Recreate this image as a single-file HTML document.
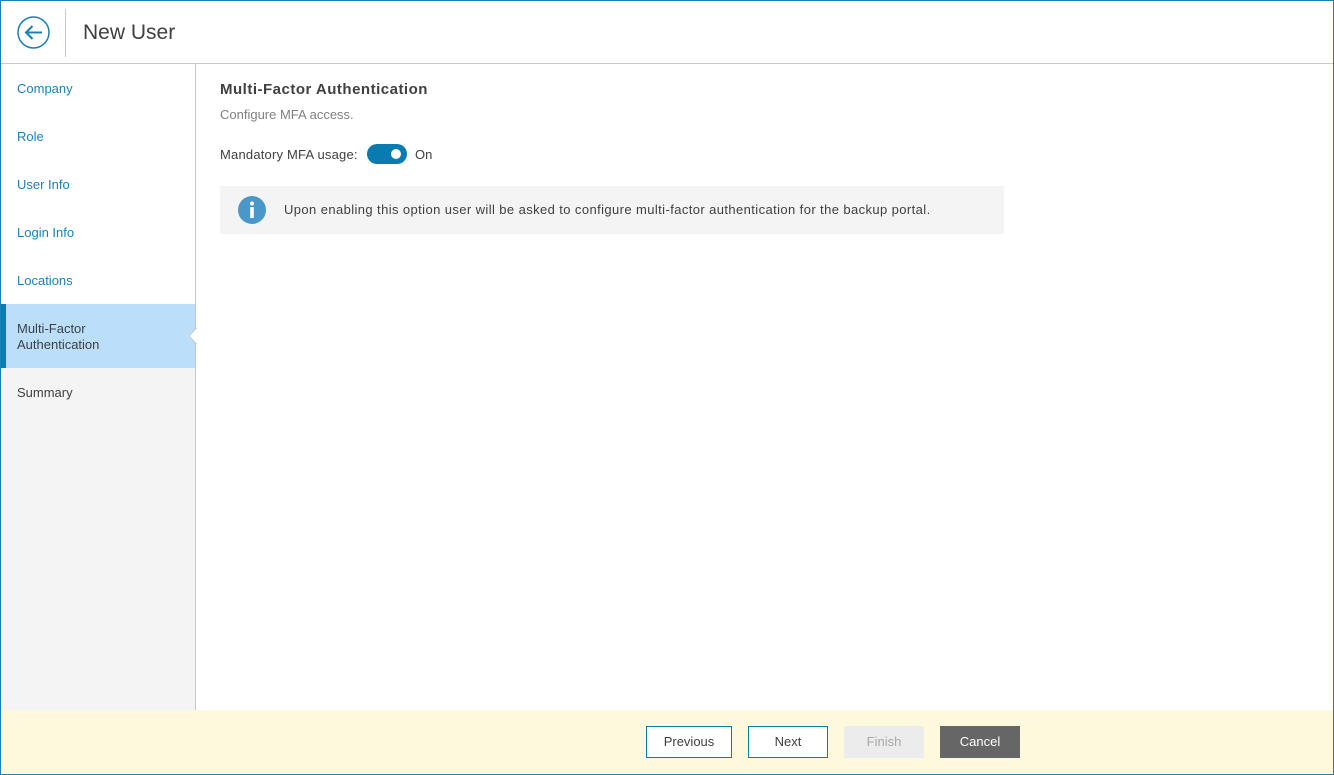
<!DOCTYPE html>
<html><head><style>
*{box-sizing:border-box;margin:0;padding:0}
body{width:1334px;height:775px;overflow:hidden;font-family:"Liberation Sans",sans-serif;background:#fff;position:relative}
.frame{position:absolute;left:0;top:0;width:1334px;height:775px;border:1px solid #1a7fb5}
.hdr{position:absolute;left:1px;top:1px;width:1332px;height:63px;border-bottom:1px solid #c8c8c8}
.title{position:absolute;left:82px;top:20px;font-size:21px;color:#404040}
.vsep{position:absolute;left:64px;top:8px;width:1px;height:48px;background:#c8c8c8}
.side{position:absolute;left:1px;top:64px;width:195px;height:646px;border-right:1px solid #c8c8c8;background:#f4f4f4}
.side .top{position:absolute;left:0;top:0;width:194px;height:240px;background:#fff}
.it{position:absolute;left:16px;font-size:13px;color:#1a7fb5}
.act{position:absolute;left:0;top:240px;width:194px;height:64px;background:#bbdffb;border-left:5px solid #0a7bb0}
.act span{position:absolute;left:11px;top:17px;font-size:13px;color:#404040;line-height:16px}
.main{position:absolute;left:220px}
.foot{position:absolute;left:1px;top:710px;width:1332px;height:63px;background:#fef9dc}
.btn{position:absolute;top:16px;height:32px;font-size:13px;text-align:center;line-height:30px}
</style></head><body>
<div class="hdr">
<svg style="position:absolute;left:16px;top:15px" width="33" height="33" viewBox="0 0 33 33"><circle cx="16.5" cy="16.5" r="15.5" fill="none" stroke="#1a7fb5" stroke-width="1.5"/><path d="M25 16.5H9M15.5 10L9 16.5L15.5 23" fill="none" stroke="#1a7fb5" stroke-width="2"/></svg>
<div class="vsep"></div>
<div class="title">New User</div>
</div>
<div class="side">
<div class="top"></div>
<div class="it" style="top:17px">Company</div>
<div class="it" style="top:65px">Role</div>
<div class="it" style="top:113px">User Info</div>
<div class="it" style="top:161px">Login Info</div>
<div class="it" style="top:209px">Locations</div>
<div class="act"><span>Multi-Factor<br>Authentication</span></div>
<svg style="position:absolute;left:187px;top:264px" width="9" height="16"><path d="M9 0L1 8L9 16Z" fill="#fff"/><path d="M8.5 0L1 8L8.5 16" fill="none" stroke="#c8c8c8"/></svg>
<div class="it" style="top:321px;color:#404040">Summary</div>
</div>
<div class="main" style="top:81px;font-size:15px;font-weight:bold;color:#404040;letter-spacing:0.5px">Multi-Factor Authentication</div>
<div class="main" style="top:107px;font-size:13px;color:#808080">Configure MFA access.</div>
<div class="main" style="top:147px;font-size:13px;color:#404040;letter-spacing:0.2px">Mandatory MFA usage:</div>
<div style="position:absolute;left:367px;top:144px;width:40px;height:20px;border-radius:10px;background:#0a7bb0"><div style="position:absolute;left:24px;top:5px;width:10px;height:10px;border-radius:50%;background:#fff"></div></div>
<div style="position:absolute;left:415px;top:147px;font-size:13px;color:#404040">On</div>
<div style="position:absolute;left:220px;top:186px;width:784px;height:48px;background:#f4f4f4">
<svg style="position:absolute;left:18px;top:10px" width="28" height="28"><circle cx="14" cy="14" r="14" fill="#4a97c9"/><circle cx="14" cy="7.5" r="2" fill="#fff"/><rect x="12.2" y="11" width="3.6" height="11" fill="#fff"/></svg>
<div style="position:absolute;left:64px;top:16px;font-size:13px;letter-spacing:0.4px;color:#404040">Upon enabling this option user will be asked to configure multi-factor authentication for the backup portal.</div>
</div>
<div class="foot">
<div class="btn" style="left:645px;width:86px;border:1px solid #0a7bb0;background:#fff;color:#404040">Previous</div>
<div class="btn" style="left:747px;width:80px;border:1px solid #0a7bb0;background:#fff;color:#404040">Next</div>
<div class="btn" style="left:843px;width:80px;background:#ececec;color:#a8a8a8;line-height:32px">Finish</div>
<div class="btn" style="left:939px;width:80px;background:#666;color:#fff;line-height:32px">Cancel</div>
</div>
<div class="frame"></div>
</body></html>
